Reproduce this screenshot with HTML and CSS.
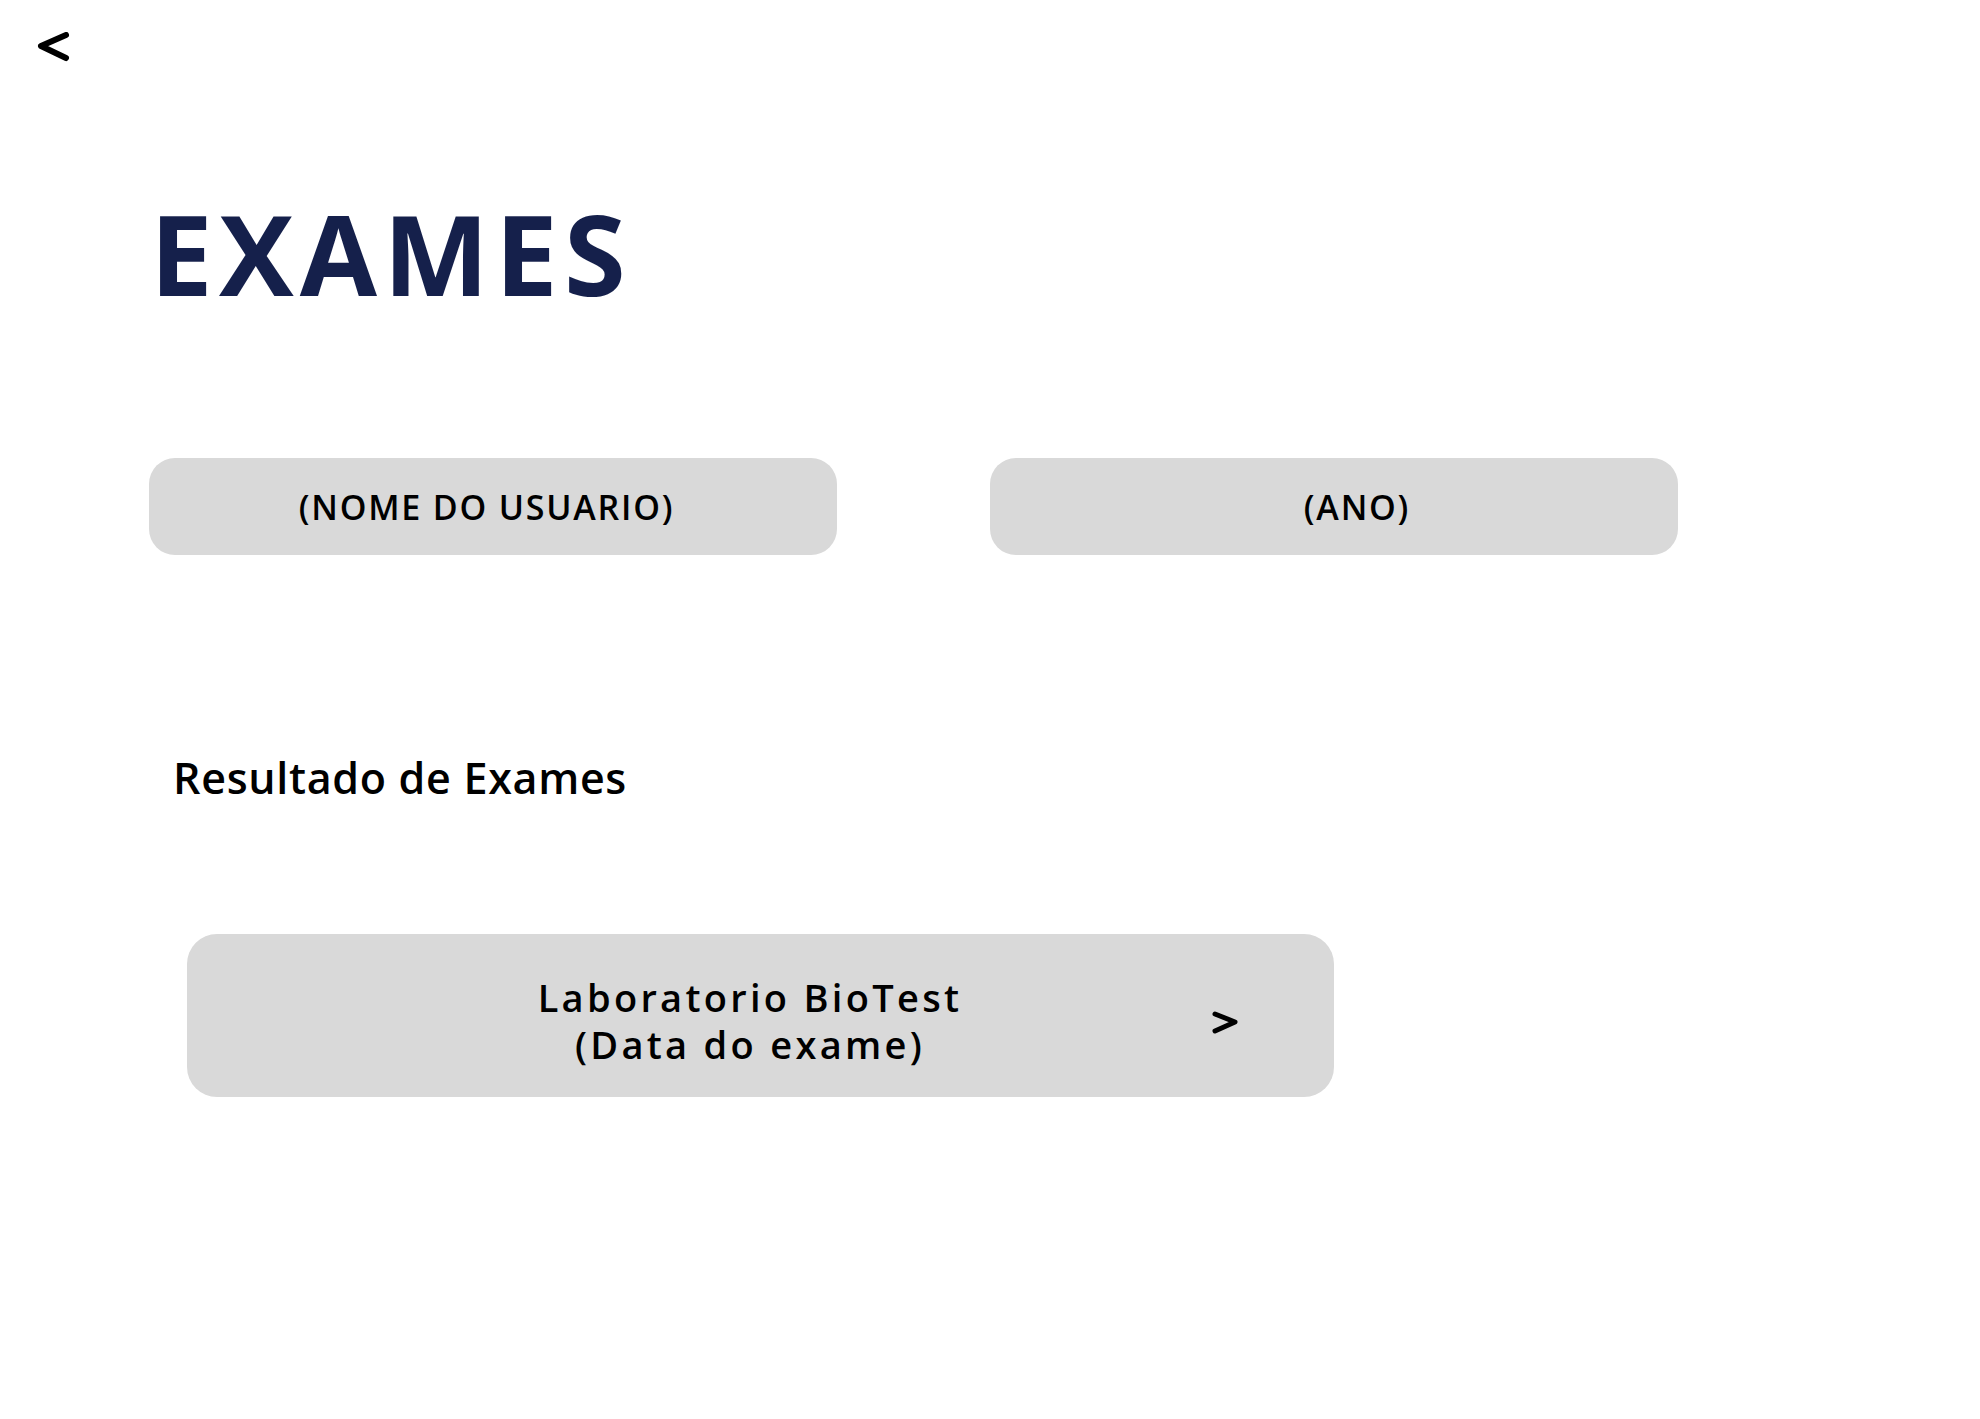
FILE: index.html
```html
<!DOCTYPE html>
<html lang="pt">
<head>
<meta charset="utf-8">
<title>Exames</title>
<link rel="stylesheet" href="styles.css">
</head>
<body>
<header class="topbar">
  <button class="back" aria-label="Voltar">
    <svg width="34" height="32" viewBox="0 0 34 32"><polyline points="29,3 4,14 29,26" fill="none" stroke="#000" stroke-width="6" stroke-linecap="round" stroke-linejoin="round"/></svg>
  </button>
</header>
<main class="content">
  <h1 class="title">EXAMES</h1>
  <div class="filters">
    <div class="pill pill-user">(NOME DO USUARIO)</div>
    <div class="pill pill-year">(ANO)</div>
  </div>
  <h2 class="section">Resultado de Exames</h2>
  <div class="card">
    <div class="card-text">
      <div class="card-line">Laboratorio BioTest</div>
      <div class="card-line">(Data do exame)</div>
    </div>
    <svg class="chev" width="28" height="25" viewBox="0 0 28 25"><polyline points="4,3 24,11 4,20" fill="none" stroke="#000" stroke-width="5" stroke-linecap="round" stroke-linejoin="round"/></svg>
  </div>
</main>
</body>
</html>
```
FILE: styles.css
```css
html, body {
  margin: 0;
  padding: 0;
  background: #ffffff;
}
body {
  font-family: "Open Sans", "Lato", sans-serif;
  color: #000;
  width: 1980px;
  min-height: 1419px;
}
.topbar {
  padding: 32px 0 0 37px;
  height: 32px;
}
.back {
  display: block;
  padding: 0;
  margin: 0;
  border: 0;
  background: none;
  width: 34px;
  height: 32px;
}
.back svg { display: block; }
.content {
  padding-left: 149px;
}
.title {
  margin: 133px 0 0 1px;
  font-size: 112px;
  line-height: 112px;
  font-weight: 700;
  letter-spacing: 6.2px;
  color: #15204b;
}
.filters {
  display: flex;
  gap: 153px;
  margin-top: 149px;
}
.pill {
  width: 688px;
  height: 97px;
  box-sizing: border-box;
  background: #d9d9d9;
  border-radius: 26px;
  display: flex;
  align-items: center;
  justify-content: center;
  font-size: 34px;
  font-weight: 600;
  letter-spacing: 1.8px;
}
.pill-user { padding-right: 13px; }
.pill-year { padding-left: 46px; }
.section {
  margin: 197px 0 0 24px;
  font-size: 43px;
  line-height: 52px;
  font-weight: 600;
  letter-spacing: 0.7px;
}
.card {
  margin: 130px 0 0 38px;
  width: 1147px;
  height: 163px;
  box-sizing: border-box;
  background: #d9d9d9;
  border-radius: 30px;
  display: grid;
  grid-template-columns: 1fr auto;
  align-items: center;
  padding: 10px 95px 0 102px;
}
.card-text {
  text-align: center;
  font-size: 38px;
  font-weight: 600;
  letter-spacing: 3.3px;
}
.card-line {
  line-height: 47px;
}
.chev { display: block; margin-top: 6px; }
```
